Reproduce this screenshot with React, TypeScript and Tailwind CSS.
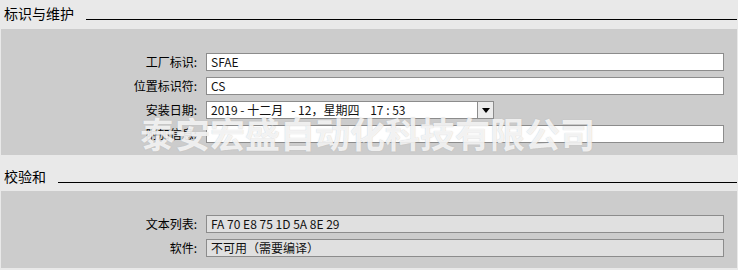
import React from "react";

const font = { fontFamily: '"Noto Sans CJK SC", "Liberation Sans", sans-serif' };

const SectionHeader = ({ title, top }: { title: string; top: string }) => (
  <div className={`flex items-start ${top}`}>
    <span className="pl-[4px] text-[14px] leading-[18px] text-black">{title}</span>
    <div className="ml-[12px] mr-[1px] mt-[15px] h-px flex-1 bg-black" />
  </div>
);

const Field = ({ label, value, readOnly }: { label: string; value: string; readOnly?: boolean }) => (
  <div className="flex h-[18px] items-center">
    <div className="w-[197px] pr-[1px] text-right text-[12px] leading-[18px] text-black">{label}</div>
    <div
      className={`ml-[8px] h-[18px] w-[518px] border border-[#8c8c8c] pl-[4px] text-[12px] leading-[16px] text-[#111] ${
        readOnly ? "bg-[#e0e0e0]" : "bg-white"
      }`}
    >
      {value}
    </div>
  </div>
);

const DateField = () => (
  <div className="flex h-[18px] items-center">
    <div className="w-[197px] pr-[1px] text-right text-[12px] leading-[18px] text-black">安装日期:</div>
    <div className="ml-[8px] flex h-[18px] w-[288px] border border-[#8c8c8c] bg-white">
      <div className="flex-1 whitespace-pre pl-[4px] text-[12px] leading-[16px] text-[#111]">
        {"2019 - 十二月   - 12，星期四    17 : 53"}
      </div>
      <div className="flex w-[16px] items-center justify-center border-l border-[#8c8c8c] bg-[#ececec]">
        <svg width="8" height="5" viewBox="0 0 8 5">
          <path d="M0 0 H8 L4 5 Z" fill="#000" />
        </svg>
      </div>
    </div>
  </div>
);

export default function App() {
  return (
    <div className="relative h-[270px] w-[738px] overflow-hidden bg-[#e9e9e9]" style={font}>
      <div className="h-[29px]">
        <SectionHeader title="标识与维护" top="pt-[4px]" />
      </div>

      <div className="mx-[1px] flex h-[126px] flex-col gap-[6px] bg-[#cccccc] pt-[24px]">
        <Field label="工厂标识:" value="SFAE" />
        <Field label="位置标识符:" value="CS" />
        <DateField />
        <Field label="附加信息:" value="" />
      </div>

      <div className="h-[36px]">
        <SectionHeader title="校验和" top="pt-[12px]" />
      </div>

      <div className="mx-[1px] flex h-[77px] flex-col gap-[6px] bg-[#cccccc] pt-[24px]">
        <Field label="文本列表:" value="FA 70 E8 75 1D 5A 8E 29" readOnly />
        <Field label="软件:" value="不可用（需要编译）" readOnly />
      </div>

      {/* watermark */}
      <div className="pointer-events-none absolute left-[140px] top-[113px] whitespace-nowrap text-[35px] font-bold leading-[40px] text-white/80 [text-shadow:0_0_1px_rgba(150,150,150,0.6)]">
        泰安宏盛自动化科技有限公司
      </div>
    </div>
  );
}
